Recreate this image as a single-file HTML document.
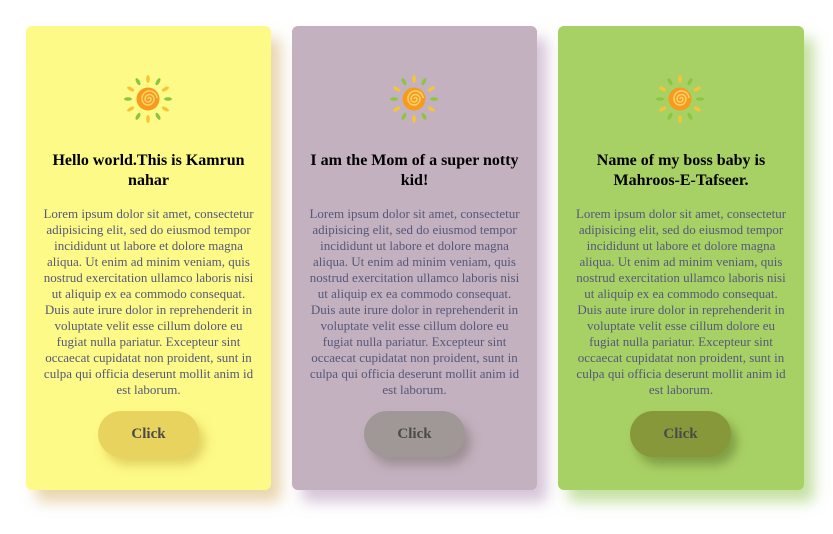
<!DOCTYPE html>
<html><head><meta charset="utf-8"><style>
body{margin:0;width:833px;height:534px;background:#fff;font-family:"Liberation Serif",serif;overflow:hidden}
.card{position:absolute;top:26px;width:245px;height:464px;border-radius:6px;text-align:center;box-sizing:border-box}
.sun{position:absolute;left:98px;top:49px}
h3{margin:0;position:absolute;left:14px;right:14px;top:125px;font-size:16px;line-height:20px;color:#000}
p{margin:0;position:absolute;left:14px;right:14px;top:180px;font-size:13px;line-height:16px;color:#55587a}
.btn{position:absolute;left:72px;top:385px;width:101px;height:46px;border-radius:23px;font-weight:bold;font-size:15px;line-height:46px;color:#4a4a48}
</style></head><body>
<svg width="0" height="0" style="position:absolute"><defs>
<g id="sun">
<g transform="translate(24,24)">
<g fill="#f7c531">
<ellipse cx="0" cy="-20" rx="1.8" ry="4"/>
<ellipse cx="0" cy="-20" rx="1.8" ry="4" transform="rotate(60)"/>
<ellipse cx="0" cy="-20" rx="1.8" ry="4" transform="rotate(120)"/>
<ellipse cx="0" cy="-20" rx="1.8" ry="4" transform="rotate(180)"/>
<ellipse cx="0" cy="-20" rx="1.8" ry="4" transform="rotate(240)"/>
<ellipse cx="0" cy="-20" rx="1.8" ry="4" transform="rotate(300)"/>
</g>
<g fill="#8cc63f">
<ellipse cx="0" cy="-20" rx="1.8" ry="4" transform="rotate(30)"/>
<ellipse cx="0" cy="-20" rx="1.8" ry="4" transform="rotate(90)"/>
<ellipse cx="0" cy="-20" rx="1.8" ry="4" transform="rotate(150)"/>
<ellipse cx="0" cy="-20" rx="1.8" ry="4" transform="rotate(210)"/>
<ellipse cx="0" cy="-20" rx="1.8" ry="4" transform="rotate(270)"/>
<ellipse cx="0" cy="-20" rx="1.8" ry="4" transform="rotate(330)"/>
</g>
<circle r="11.5" fill="#f89b1c"/>
<path d="M0,0 a1.5,1.5 0 0 1 3,0 a3,3 0 0 1 -6,0 a4.5,4.5 0 0 1 9,0 a6,6 0 0 1 -12,0 a7.5,7.5 0 0 1 15,-1" fill="none" stroke="#fcd36a" stroke-width="1.5"/>
</g></g></defs></svg>

<div class="card" style="left:26px;background:#fefa87;box-shadow:10px 12px 14px rgba(215,180,110,.55)">
<svg class="sun" width="48" height="48"><use href="#sun"/></svg>
<h3>Hello world.This is Kamrun nahar</h3>
<p>Lorem ipsum dolor sit amet, consectetur adipisicing elit, sed do eiusmod tempor incididunt ut labore et dolore magna aliqua. Ut enim ad minim veniam, quis nostrud exercitation ullamco laboris nisi ut aliquip ex ea commodo consequat. Duis aute irure dolor in reprehenderit in voluptate velit esse cillum dolore eu fugiat nulla pariatur. Excepteur sint occaecat cupidatat non proident, sunt in culpa qui officia deserunt mollit anim id est laborum.</p>
<div class="btn" style="background:#e8d35e;box-shadow:6px 8px 10px rgba(200,170,60,.5)">Click</div>
</div>

<div class="card" style="left:292px;background:#c4b1bf;box-shadow:10px 12px 14px rgba(180,150,185,.55)">
<svg class="sun" width="48" height="48"><use href="#sun"/></svg>
<h3>I am the Mom of a super notty kid!</h3>
<p>Lorem ipsum dolor sit amet, consectetur adipisicing elit, sed do eiusmod tempor incididunt ut labore et dolore magna aliqua. Ut enim ad minim veniam, quis nostrud exercitation ullamco laboris nisi ut aliquip ex ea commodo consequat. Duis aute irure dolor in reprehenderit in voluptate velit esse cillum dolore eu fugiat nulla pariatur. Excepteur sint occaecat cupidatat non proident, sunt in culpa qui officia deserunt mollit anim id est laborum.</p>
<div class="btn" style="background:#a09896;box-shadow:6px 8px 10px rgba(120,110,110,.5)">Click</div>
</div>

<div class="card" style="left:558px;width:246px;background:#a8d165;box-shadow:10px 12px 14px rgba(150,200,90,.55)">
<svg class="sun" width="48" height="48"><use href="#sun"/></svg>
<h3>Name of my boss baby is Mahroos-E-Tafseer.</h3>
<p>Lorem ipsum dolor sit amet, consectetur adipisicing elit, sed do eiusmod tempor incididunt ut labore et dolore magna aliqua. Ut enim ad minim veniam, quis nostrud exercitation ullamco laboris nisi ut aliquip ex ea commodo consequat. Duis aute irure dolor in reprehenderit in voluptate velit esse cillum dolore eu fugiat nulla pariatur. Excepteur sint occaecat cupidatat non proident, sunt in culpa qui officia deserunt mollit anim id est laborum.</p>
<div class="btn" style="background:#87983a;box-shadow:6px 8px 10px rgba(90,110,40,.5)">Click</div>
</div>
</body></html>
